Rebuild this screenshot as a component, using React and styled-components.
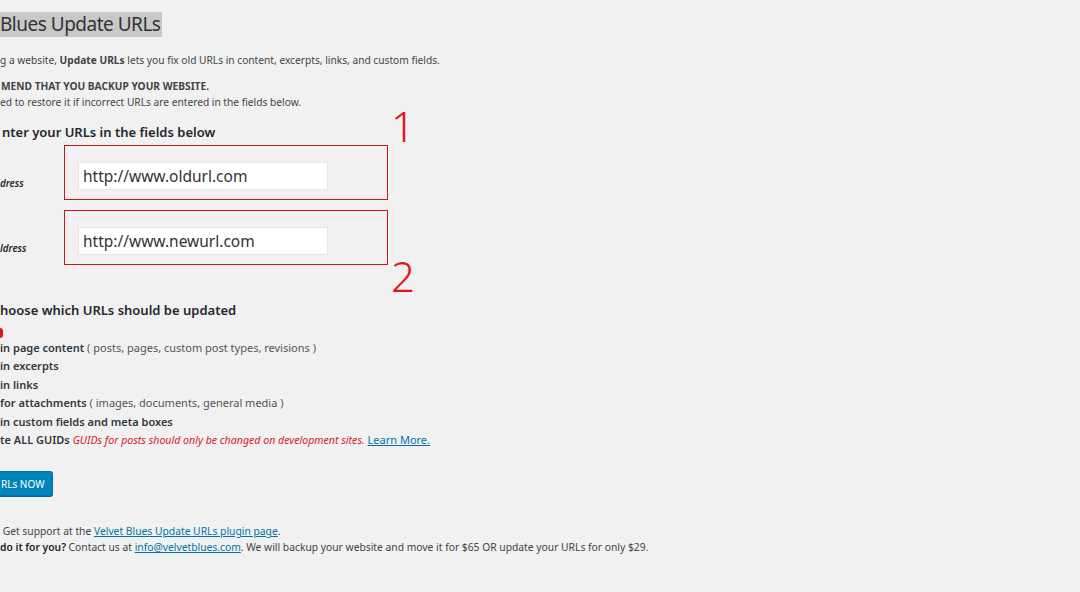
import styled, { createGlobalStyle } from "styled-components";

const GlobalStyle = createGlobalStyle`
  html, body {
    margin: 0;
    padding: 0;
    background: #f1f1f1;
    overflow: hidden;
  }
  body {
    font-family: "Noto Sans", "Open Sans", sans-serif;
    color: #444;
  }
`;

const Page = styled.div`
  width: 1080px;
  height: 592px;
  padding-top: 12px;
  box-sizing: border-box;
`;

const Title = styled.h1`
  display: inline-block;
  margin: 0;
  padding: 0 2px 0 0;
  background: #c8c8c8;
  color: #333;
  font-weight: 400;
  font-size: 19px;
  line-height: 25px;
  letter-spacing: -0.5px;
`;

const Para = styled.p`
  margin: ${(p) => p.$top || 0}px 0 0;
  font-size: 10.2px;
  line-height: ${(p) => p.$lh || 16}px;
  color: #444;
  padding-left: ${(p) => p.$indent || 0}px;
`;

const Heading = styled.h2`
  margin: ${(p) => p.$top}px 0 0;
  padding-left: ${(p) => p.$indent || 0}px;
  font-size: 13px;
  line-height: 18px;
  font-weight: 600;
  color: #23282d;
`;

const Fields = styled.div`
  display: flex;
  flex-direction: column;
  gap: 10px;
  margin-top: 4px;
`;

const FieldRow = styled.div`
  display: flex;
  align-items: flex-start;
`;

const Label = styled.label`
  width: 64px;
  padding-top: ${(p) => p.$top}px;
  font-size: 9.8px;
  font-style: italic;
  font-weight: 600;
  color: #23282d;
  line-height: 12px;
`;

const Marked = styled.div`
  position: relative;
  width: 324px;
  height: 55px;
  box-sizing: border-box;
  border: 1px solid #d0141c;
  padding: 16px 0 0 13px;
`;

const Input = styled.input`
  display: block;
  width: 250px;
  height: 28px;
  box-sizing: border-box;
  margin: 0;
  border: 1px solid #e6e6e6;
  background: #fff;
  padding: 0 4px;
  font-family: "Noto Sans", sans-serif;
  font-size: 15.5px;
  color: #333;
  outline: none;
`;

const Number = styled.span`
  position: absolute;
  left: 326px;
  top: ${(p) => p.$top}px;
  color: #e3141b;
  font-family: "Noto Sans", sans-serif;
  font-size: 42px;
  line-height: 1;
  font-weight: 300;
`;

const Dot = styled.span`
  display: block;
  width: 3px;
  height: 10px;
  margin-top: 9px;
  border-radius: 0 3px 3px 0;
  background: #e3141b;
`;

const List = styled.ul`
  list-style: none;
  margin: 1px 0 0;
  padding: 0;
`;

const Item = styled.li`
  font-size: 11px;
  line-height: 18.4px;
  color: #555;
  white-space: nowrap;
  b {
    color: #32373c;
    font-weight: 600;
  }
`;

const Warn = styled.em`
  color: #d2232a;
  font-size: 10.6px;
`;

const A = styled.a`
  color: #0073aa;
  text-decoration: underline;
`;

const Button = styled.button`
  display: block;
  margin-top: 22px;
  height: 25px;
  width: 53px;
  padding: 0 0 0 1px;
  text-align: left;
  background: #0085ba;
  border: 1px solid #0073aa;
  border-left: none;
  border-radius: 0 3px 3px 0;
  box-shadow: 0 1px 0 #006799;
  color: #fff;
  font-family: "Noto Sans", sans-serif;
  font-size: 10px;
`;

const Footer = styled.div`
  margin-top: 27px;
  font-size: 10.3px;
  line-height: 16px;
  color: #444;
  white-space: nowrap;
  b {
    font-weight: 600;
    color: #23282d;
  }
`;

export default function App() {
  return (
    <Page>
      <GlobalStyle />
      <Title>Blues Update URLs</Title>
      <Para $top={16} $lh={14}>
        g a website, <b>Update URLs</b> lets you fix old URLs in content, excerpts, links, and custom fields.
      </Para>
      <Para $top={11} $indent={1}>
        <b>MEND THAT YOU BACKUP YOUR WEBSITE.</b>
      </Para>
      <Para>ed to restore it if incorrect URLs are entered in the fields below.</Para>
      <Heading $top={13} $indent={2}>nter your URLs in the fields below</Heading>
      <Fields>
        <FieldRow>
          <Label $top={33}>dress</Label>
          <Marked>
            <Input defaultValue="http://www.oldurl.com" />
            <Number $top={-41}>1</Number>
          </Marked>
        </FieldRow>
        <FieldRow>
          <Label $top={33}>ldress</Label>
          <Marked>
            <Input defaultValue="http://www.newurl.com" />
            <Number $top={44}>2</Number>
          </Marked>
        </FieldRow>
      </Fields>
      <Heading $top={36}>hoose which URLs should be updated</Heading>
      <Dot />
      <List>
        <Item><b>in page content</b> ( posts, pages, custom post types, revisions )</Item>
        <Item><b>in excerpts</b></Item>
        <Item><b>in links</b></Item>
        <Item><b>for attachments</b> ( images, documents, general media )</Item>
        <Item><b>in custom fields and meta boxes</b></Item>
        <Item>
          <b>te ALL GUIDs</b> <Warn>GUIDs for posts should only be changed on development sites.</Warn>{" "}
          <A href="#">Learn More.</A>
        </Item>
      </List>
      <Button>RLs NOW</Button>
      <Footer>
        <div>
          &nbsp;Get support at the <A href="#">Velvet Blues Update URLs plugin page</A>.
        </div>
        <div>
          <b>do it for you?</b> Contact us at <A href="#">info@velvetblues.com</A>. We will backup your website and move it for $65 OR update your URLs for only $29.
        </div>
      </Footer>
    </Page>
  );
}
